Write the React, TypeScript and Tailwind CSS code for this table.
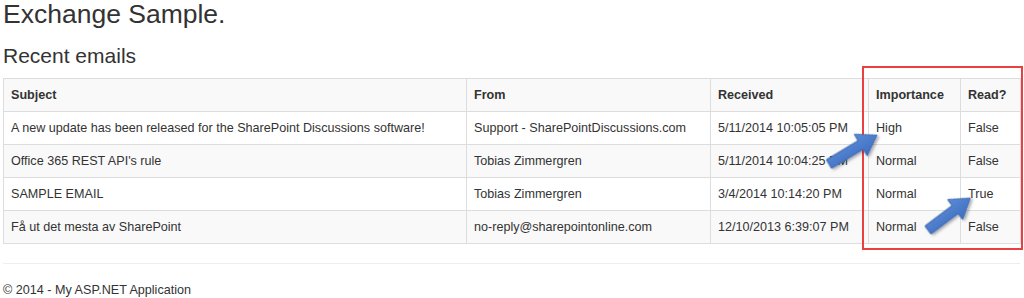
import React from "react";

const emails = [
  {
    subject: "A new update has been released for the SharePoint Discussions software!",
    from: "Support - SharePointDiscussions.com",
    received: "5/11/2014 10:05:05 PM",
    importance: "High",
    read: "False",
  },
  {
    subject: "Office 365 REST API's rule",
    from: "Tobias Zimmergren",
    received: "5/11/2014 10:04:25 PM",
    importance: "Normal",
    read: "False",
  },
  {
    subject: "SAMPLE EMAIL",
    from: "Tobias Zimmergren",
    received: "3/4/2014 10:14:20 PM",
    importance: "Normal",
    read: "True",
  },
  {
    subject: "Få ut det mesta av SharePoint",
    from: "no-reply@sharepointonline.com",
    received: "12/10/2013 6:39:07 PM",
    importance: "Normal",
    read: "False",
  },
];

function Arrow({ x, y, angle, length }: { x: number; y: number; angle: number; length: number }) {
  const L = length;
  const pts = `0,-5 ${L - 19},-5 ${L - 19},-12.5 ${L},0 ${L - 19},12.5 ${L - 19},5 0,5`;
  return (
    <g transform={`translate(${x} ${y}) rotate(${angle})`} filter="url(#shadow)">
      <polygon points={pts} fill="url(#blue)" stroke="#3d68b0" strokeWidth="1" strokeLinejoin="round" />
    </g>
  );
}

export default function App() {
  const cell = "border border-[#dddddd] px-[7px] align-middle";
  return (
    <div
      className="relative h-[298px] w-[1024px] overflow-hidden bg-white text-[#333333]"
      style={{ fontFamily: '"Liberation Sans", Arial, sans-serif' }}
    >
      <div className="pl-[3px]">
        <h1 className="text-[26.5px] leading-[28px] font-normal">Exchange Sample.</h1>
        <h3 className="mt-[16px] text-[21px] leading-[24px] font-normal">Recent emails</h3>
        <table className="mt-[10px] w-[1017px] table-fixed border-collapse text-[12.6px]">
          <colgroup>
            <col className="w-[463px]" />
            <col className="w-[244px]" />
            <col className="w-[158px]" />
            <col className="w-[92px]" />
            <col className="w-[60px]" />
          </colgroup>
          <tbody>
            <tr className="h-[33px] bg-[#f9f9f9] font-bold">
              <th className={`${cell} text-left`}>Subject</th>
              <th className={`${cell} text-left`}>From</th>
              <th className={`${cell} text-left`}>Received</th>
              <th className={`${cell} text-left`}>Importance</th>
              <th className={`${cell} text-left`}>Read?</th>
            </tr>
            {emails.map((e, i) => (
              <tr key={i} className={`h-[33px] ${i % 2 === 1 ? "bg-[#f9f9f9]" : "bg-white"}`}>
                <td className={cell}>{e.subject}</td>
                <td className={cell}>{e.from}</td>
                <td className={cell}>{e.received}</td>
                <td className={cell}>{e.importance}</td>
                <td className={cell}>{e.read}</td>
              </tr>
            ))}
          </tbody>
        </table>
        <hr className="mt-[19px] w-[1017px] border-t border-[#eeeeee]" />
        <footer className="mt-[17px] text-[12.6px] leading-[18px]">© 2014 - My ASP.NET Application</footer>
      </div>

      <div className="absolute left-[862px] top-[66px] h-[184px] w-[161px] border-2 border-[#e8413f]" />

      <svg className="pointer-events-none absolute left-0 top-0" width="1024" height="298">
        <defs>
          <linearGradient id="blue" x1="0" y1="0" x2="0" y2="1">
            <stop offset="0" stopColor="#5b8ad8" />
            <stop offset="1" stopColor="#3f6fbf" />
          </linearGradient>
          <filter id="shadow" x="-30%" y="-30%" width="160%" height="160%">
            <feDropShadow dx="1" dy="2" stdDeviation="1.5" floodColor="#000" floodOpacity="0.35" />
          </filter>
        </defs>
        <Arrow x={829} y={164} angle={-31} length={56} />
        <Arrow x={928} y={230} angle={-37} length={53} />
      </svg>
    </div>
  );
}
